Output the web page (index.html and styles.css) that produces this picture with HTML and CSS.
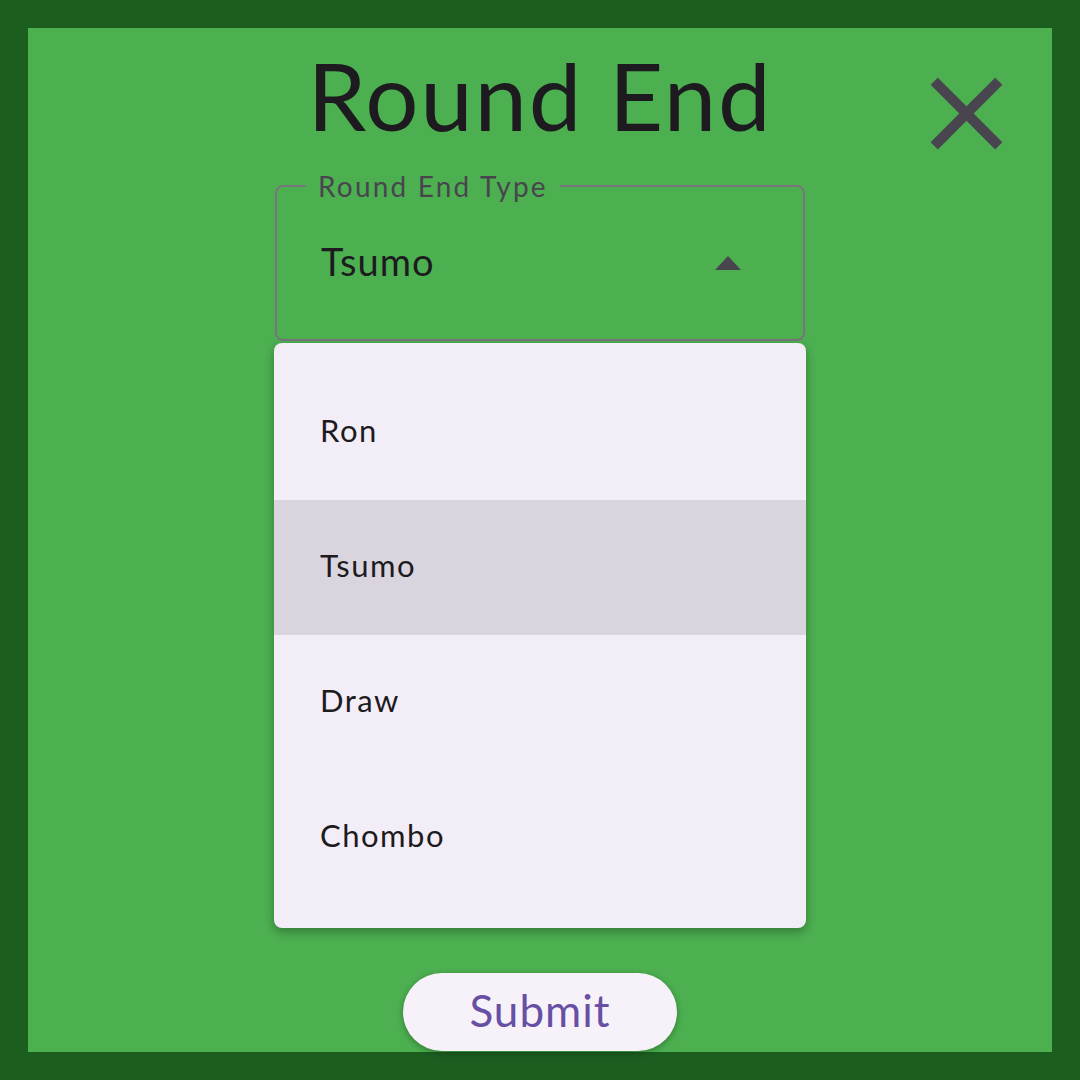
FILE: index.html
```html
<!DOCTYPE html>
<html lang="en">
<head>
  <meta charset="UTF-8" />
  <meta name="viewport" content="width=device-width, initial-scale=1.0"/>
  <title>Round End</title>
  <link rel="stylesheet" href="styles.css">
</head>
<body>
  <div class="frame">
    <div class="dialog">
      <header class="dialog-head">
        <div></div>
        <h1>Round End</h1>
        <button class="close-btn" aria-label="Close">
          <svg viewBox="0 0 24 24" width="123" height="123">
            <path d="M19 6.41 17.59 5 12 10.59 6.41 5 5 6.41 10.59 12 5 17.59 6.41 19 12 13.41 17.59 19 19 17.59 13.41 12z" fill="#49454f"/>
          </svg>
        </button>
      </header>

      <div class="select-wrap">
        <fieldset class="field">
          <legend>Round End Type</legend>
          <span class="value">Tsumo</span>
          <span class="arrow"></span>
        </fieldset>

        <ul class="menu">
          <li>Ron</li>
          <li class="selected">Tsumo</li>
          <li>Draw</li>
          <li>Chombo</li>
        </ul>
      </div>

      <button class="submit">Submit</button>
    </div>
  </div>
</body>
</html>
```

FILE: styles.css
```css
body {
  margin: 0;
  font-family: "Lato", "Noto Sans", sans-serif;
}
.frame {
  width: 1080px;
  height: 1080px;
  box-sizing: border-box;
  padding: 28px;
  background: #1b5e20;
}
.dialog {
  height: 100%;
  background: #4caf50;
  display: flex;
  flex-direction: column;
  align-items: center;
}
.dialog-head {
  width: 100%;
  display: grid;
  grid-template-columns: 1fr auto 1fr;
  align-items: start;
}
.dialog-head h1 {
  margin: 2px 0 0;
  font-size: 94px;
  font-weight: 400;
  line-height: 130px;
  color: #1d1b20;
  letter-spacing: 1.8px;
}
.close-btn {
  justify-self: end;
  margin: 24px 24px 0 0;
  padding: 0;
  border: none;
  background: none;
  line-height: 0;
  cursor: pointer;
}
.select-wrap {
  position: relative;
  width: 530px;
  margin-top: -3px;
}
.field {
  margin: 0;
  height: 169px;
  box-sizing: border-box;
  border: 2px solid #79747e;
  border-radius: 8px;
  padding: 0 62px 0 44px;
  display: flex;
  align-items: center;
  justify-content: space-between;
}
.field legend {
  margin-left: -15px;
  padding: 0 12px;
  font-size: 28px;
  letter-spacing: 2.2px;
  color: #49454f;
  line-height: 1;
}
.value {
  font-size: 38px;
  letter-spacing: 1px;
  color: #1d1b20;
  margin-top: -18px;
}
.arrow {
  width: 0;
  height: 0;
  border-left: 13.5px solid transparent;
  border-right: 13.5px solid transparent;
  border-bottom: 14px solid #49454f;
  margin-top: -14px;
}
.menu {
  position: absolute;
  top: 171px;
  left: -1px;
  width: 532px;
  margin: 0;
  padding: 22px 0 23px;
  list-style: none;
  background: #f3edf7;
  border-radius: 8px;
  box-shadow: 0 4px 10px rgba(0,0,0,0.3);
}
.menu li {
  height: 135px;
  box-sizing: border-box;
  padding: 0 0 5px 46px;
  display: flex;
  align-items: center;
  font-size: 31px;
  letter-spacing: 1.5px;
  color: #1d1b20;
}
.menu li.selected {
  background: #dad4df;
}
.submit {
  margin-top: auto;
  margin-bottom: 1px;
  width: 274px;
  height: 78px;
  padding: 0 0 5px;
  border: none;
  border-radius: 39px;
  background: #f7f2fa;
  color: #6750a4;
  font-family: inherit;
  font-size: 44px;
  letter-spacing: 1px;
  box-shadow: 0 2px 6px rgba(0,0,0,0.3);
  cursor: pointer;
}
```
